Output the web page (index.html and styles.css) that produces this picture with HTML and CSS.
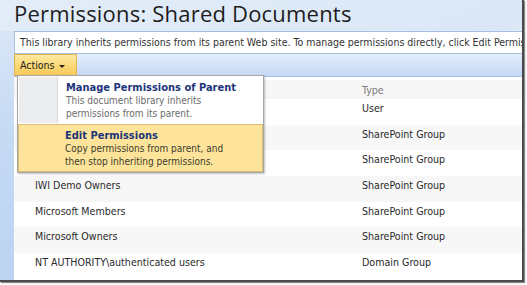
FILE: index.html
```html
<!DOCTYPE html>
<html>
<head>
<meta charset="utf-8">
<link rel="stylesheet" href="styles.css">
</head>
<body>
<div class="frame">
  <div class="page">
    <div class="title-area">
      <h1 class="title">Permissions: Shared Documents</h1>
    </div>
    <div class="main">
      <div class="strip"></div>
      <div class="content">
        <div class="desc">This library inherits permissions from its parent Web site. To manage permissions directly, click Edit Permissions.</div>
        <div class="toolbar">
          <div class="actions">Actions <span class="caret"></span></div>
        </div>
        <div class="table">
          <div class="row head"><span class="name"></span><span class="type">Type</span></div>
          <div class="row"><span class="name"></span><span class="type">User</span></div>
          <div class="row alt"><span class="name"></span><span class="type">SharePoint Group</span></div>
          <div class="row"><span class="name"></span><span class="type">SharePoint Group</span></div>
          <div class="row alt"><span class="name">IWI Demo Owners</span><span class="type">SharePoint Group</span></div>
          <div class="row"><span class="name">Microsoft Members</span><span class="type">SharePoint Group</span></div>
          <div class="row alt"><span class="name">Microsoft Owners</span><span class="type">SharePoint Group</span></div>
          <div class="row"><span class="name">NT AUTHORITY\authenticated users</span><span class="type">Domain Group</span></div>
        </div>
        <div class="menu">
          <div class="item">
            <div class="gutter"></div>
            <div class="text">
              <div class="label">Manage Permissions of Parent</div>
              <div class="sub">This document library inherits<br>permissions from its parent.</div>
            </div>
          </div>
          <div class="item hot">
            <div class="gutter"></div>
            <div class="text">
              <div class="label">Edit Permissions</div>
              <div class="sub">Copy permissions from parent, and<br>then stop inheriting permissions.</div>
            </div>
          </div>
        </div>
      </div>
    </div>
  </div>
</div>
</body>
</html>
```
FILE: styles.css
```css
html, body {
  margin: 0;
  padding: 0;
  background: #ffffff;
}
body {
  width: 527px;
  height: 285px;
  overflow: hidden;
  font-family: "DejaVu Sans", sans-serif;
}
.frame {
  width: 522px;
  height: 280px;
  border-right: 2px solid #4a4a4a;
  border-bottom: 2px solid #4a4a4a;
  box-shadow: 1px 1px 1px #8a8a8a;
  overflow: hidden;
}
.page {
  width: 100%;
  height: 100%;
  display: flex;
  flex-direction: column;
  background: linear-gradient(160deg, #e3edf9 0%, #dbe7f7 45%, #f4f8fd 58%, #c9dcf4 80%, #bcd3f2 100%);
}
.title-area {
  height: 31px;
  padding-left: 14px;
  flex: none;
  display: flex;
  align-items: flex-start;
}
.title {
  margin: 0;
  font-family: "Open Sans", sans-serif;
  font-weight: 400;
  font-size: 22px;
  line-height: 27px;
  color: #1d1d1d;
  letter-spacing: 0.2px;
  white-space: nowrap;
}
.main {
  flex: 1;
  display: flex;
}
.strip {
  width: 14px;
  flex: none;
  background: linear-gradient(180deg, #d8e5f7 0%, #c6daf4 40%, #bcd3f1 100%);
}
.content {
  flex: 1;
  position: relative;
  background: #ffffff;
  display: flex;
  flex-direction: column;
}
.desc {
  height: 21px;
  border: 1px solid #a8bedd;
  border-right: none;
  background: #ffffff;
  font-size: 10.5px;
  line-height: 20px;
  padding-left: 5px;
  white-space: nowrap;
  overflow: hidden;
  color: #333;
  font-family: "DejaVu Sans Condensed", "DejaVu Sans", sans-serif;
}
.toolbar {
  height: 22px;
  background: linear-gradient(180deg, #e3eefc 0%, #d3e3f9 50%, #c4d9f6 100%);
  border-bottom: 1px solid #a9c1e3;
  display: flex;
  align-items: stretch;
}
.actions {
  width: 63px;
  box-sizing: border-box;
  background: linear-gradient(180deg, #fde9a0 0%, #fbd876 55%, #f6c85a 100%);
  border: 1px solid #e0b450;
  font-size: 10.5px;
  line-height: 20px;
  padding-left: 5px;
  color: #222;
  font-family: "DejaVu Sans Condensed", "DejaVu Sans", sans-serif;
}
.caret {
  display: inline-block;
  width: 0;
  height: 0;
  border-left: 3px solid transparent;
  border-right: 3px solid transparent;
  border-top: 3px solid #222;
  vertical-align: middle;
  margin-left: 2px;
}
.table {
  padding-top: 3px;
  font-size: 10.6px;
  font-family: "DejaVu Sans Condensed", "DejaVu Sans", sans-serif;
  color: #2a2a2a;
}
.row {
  height: 25.7px;
  display: flex;
  box-sizing: border-box;
  padding-top: 2px;
  line-height: 14px;
}
.row.head {
  height: 19px;
  padding-top: 3px;
  background: #f6f6f6;
  color: #7a7a7a;
}
.row.alt {
  background: #f7f7f7;
}
.name {
  width: 348px;
  padding-left: 21px;
  box-sizing: border-box;
}
.type {
  flex: 1;
}
.menu {
  position: absolute;
  left: 3px;
  top: 44px;
  width: 247px;
  box-sizing: border-box;
  border: 1px solid #a5a5a5;
  background: #ffffff;
  box-shadow: 1px 1px 2px rgba(0,0,0,0.25);
  font-family: "DejaVu Sans Condensed", "DejaVu Sans", sans-serif;
  font-size: 10px;
}
.item {
  display: flex;
  height: 48px;
  box-sizing: border-box;
  border: 1px solid transparent;
}
.item.hot {
  background: #fee49a;
  border-color: #d8bd73;
}
.gutter {
  width: 38px;
  flex: none;
  background: #ebedee;
  border-right: 1px solid #d6d8da;
}
.item.hot .gutter {
  background: transparent;
  border-right: none;
}
.text {
  padding: 4px 0 0 8px;
}
.label {
  font-weight: bold;
  color: #1c3479;
  font-size: 11px;
  line-height: 13px;
}
.sub {
  color: #6b6b6b;
  line-height: 13px;
}
.item.hot .sub {
  color: #3b3b2c;
}
```
